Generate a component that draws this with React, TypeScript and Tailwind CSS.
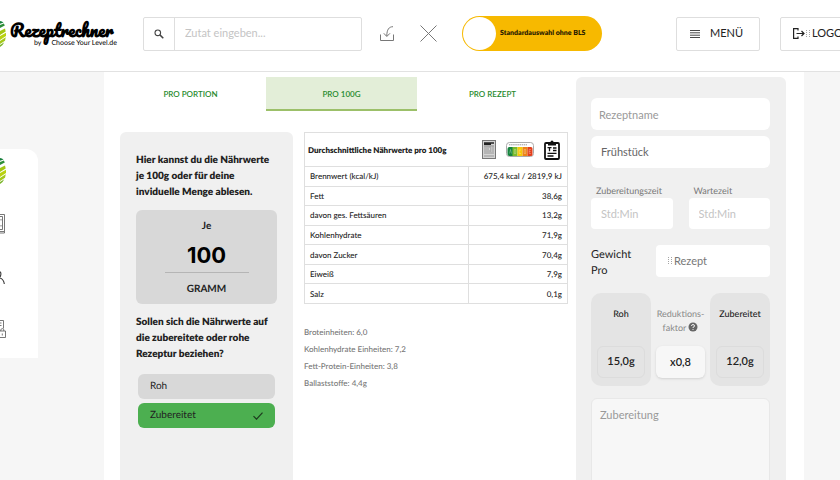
import { useState } from 'react';

const tabs = ['PRO PORTION', 'PRO 100G', 'PRO REZEPT'];

const nutrients = [
  { label: 'Brennwert (kcal/kJ)', value: '675,4 kcal / 2819,9 kJ' },
  { label: 'Fett', value: '38,6g' },
  { label: 'davon ges. Fettsäuren', value: '13,2g' },
  { label: 'Kohlenhydrate', value: '71,9g' },
  { label: 'davon Zucker', value: '70,4g' },
  { label: 'Eiweiß', value: '7,9g' },
  { label: 'Salz', value: '0,1g' },
];

const units = [
  'Broteinheiten: 6,0',
  'Kohlenhydrate Einheiten: 7,2',
  'Fett-Protein-Einheiten: 3,8',
  'Ballaststoffe: 4,4g',
];

function Ball() {
  return (
    <svg viewBox="0 0 6 28" className="h-7 w-1.5 shrink-0" aria-hidden="true">
      <path d="M0 1 Q2 1 3.500 2.500 L0 3.800Z" fill="#17803d" />
      <path d="M0 5 L3.800 3.500 L4.800 5.500 L0 8Z" fill="#2f8f3a" />
      <path d="M0 11 L5 8.500 L5.700 11.500 L0 15Z" fill="#a3c614" />
      <path d="M0 16 L6 12.800 L6 16 L0 20Z" fill="#b9d210" />
      <path d="M0 21 L5.800 17.300 L5 20.800 L0 24Z" fill="#a4c81a" />
      <path d="M0 25 L4.300 22.300 Q3 25.500 0 27Z" fill="#7ab52a" />
    </svg>
  );
}

function Dots() {
  return (
    <svg viewBox="0 0 5 8" className="h-2 w-[5px] shrink-0" fill="#a5a5a5" aria-hidden="true">
      {[0, 2, 4, 6].map((y) => (
        <g key={y}>
          <rect x="0" y={y} width="1" height="1" />
          <rect x="3" y={y} width="1" height="1" />
        </g>
      ))}
    </svg>
  );
}

function LabelIcon() {
  return (
    <svg viewBox="0 0 14 19" className="h-[19px] w-3.5" aria-hidden="true">
      <rect x="0.5" y="0.5" width="13" height="18" fill="#d4d4d4" stroke="#777" />
      <path d="M2 3h10M2 4.3h7" stroke="#222" strokeWidth="1.3" />
      <path d="M2 7h6M10 7h2M2 9h5M10 9h2M2 11h6M10 11h2M2 13h10M2 16h10" stroke="#888" strokeWidth="0.8" />
      <path d="M2 5.8h10M8.8 6v6" stroke="#666" strokeWidth="0.5" />
    </svg>
  );
}

function NutriScoreIcon() {
  return (
    <svg viewBox="0 0 28 15" className="h-[15px] w-7" aria-hidden="true">
      <rect x="0.5" y="0.5" width="27" height="14" rx="3" fill="#fff" stroke="#aaa" />
      <path d="M3 2.8h18" stroke="#999" strokeDasharray="1.5 0.6" />
      <path d="M3 5h4v9h-4a2 2 0 0 1-1.500-2v-5a2 2 0 0 1 1.500-2z" fill="#16843f" />
      <rect x="6.500" y="5" width="5" height="9" fill="#7cbb2d" />
      <rect x="11.500" y="5" width="5" height="9" fill="#f6c90a" />
      <rect x="16.500" y="5" width="5" height="9" fill="#ee8316" />
      <path d="M21.500 5h3.500a1.500 1.500 0 0 1 1.500 1.500v6a1.500 1.500 0 0 1-1.500 1.500h-3.500z" fill="#e2401d" />
      <g fill="none" stroke="#fff" strokeOpacity="0.35" strokeWidth="0.8">
        <path d="M3.500 11.500l1-4 1 4M8.300 7.500v4h1.500v-4zM15 8h-1.800v3.500H15M18.200 7.500v4h1.500v-4zM25 7.500h-1.800v4H25M23.200 9.500h1.500" />
      </g>
    </svg>
  );
}

function ClipboardIcon() {
  return (
    <svg viewBox="0 0 16 20" className="h-5 w-4" fill="none" stroke="#111" aria-hidden="true">
      <rect x="1" y="3" width="14" height="16" rx="1" strokeWidth="1.8" />
      <path d="M4 2h2.500a1.500 1.500 0 0 1 3 0H12v3.500H4z" fill="#111" stroke="none" />
      <path d="M3.500 7.700h4M5.500 7.700v3.500M9 8h3.500M9 10.500h3.500M3.500 13.300h9M3.500 16h6" strokeWidth="1.3" />
    </svg>
  );
}

function Header() {
  return (
    <header className="flex h-[72px] shrink-0 items-center border-b border-[#e2e2e2] bg-white pb-1">
      <a href="#" className="flex w-[143px] shrink-0 items-center gap-1 text-black">
        <Ball />
        <span className="flex flex-col">
          <span className="font-['Pacifico','Lato',cursive] text-[17px] leading-5 font-bold">Rezeptrechner</span>
          <span className="flex gap-2.5 pl-6 font-['Lato',sans-serif] text-[7px] leading-[7px]">
            <span>by</span>
            <span>Choose Your Level.de</span>
          </span>
        </span>
      </a>
      <form className="flex h-[34px] w-[219px] shrink-0 rounded-xs border border-[#dedede]" onSubmit={(e) => e.preventDefault()}>
        <button type="submit" aria-label="Suchen" className="flex w-[31px] items-center justify-center border-r border-[#dedede]">
          <svg viewBox="0 0 10 10" className="size-2.5" fill="none" stroke="#444" aria-hidden="true">
            <circle cx="3.800" cy="3.800" r="2.800" strokeWidth="1.100" />
            <path d="M5.900 5.900L9.300 9.300" strokeWidth="1.500" />
          </svg>
        </button>
        <input aria-label="Zutat" placeholder="Zutat eingeben..." className="min-w-0 flex-1 px-2.5 text-[11px] outline-none placeholder:text-[#c4c4c4]" />
      </form>
      <button aria-label="Importieren" className="ml-[18px] shrink-0">
        <svg viewBox="0 0 14 16" className="h-4 w-3.5" fill="none" stroke="#777" aria-hidden="true">
          <path d="M0.500 8.500v6h13v-6M13 0.700C9 0.700 6.800 3.500 6.800 10M3.800 7.300l3 3.200 3.200-3.200" />
        </svg>
      </button>
      <button aria-label="Leeren" className="ml-[26px] shrink-0">
        <svg viewBox="0 0 17 17" className="size-[17px]" fill="none" stroke="#777" aria-hidden="true">
          <path d="M0.500 0.500l16 16M16.500 0.500l-16 16" />
        </svg>
      </button>
      <label className="ml-[25px] flex h-[35px] w-[140px] shrink-0 items-center rounded-full bg-[#f7b900] pl-px text-[7px] font-extrabold text-[#2b2000]">
        <input type="checkbox" className="mr-1 size-[33px] shrink-0 appearance-none rounded-full bg-white" />
        <span className="whitespace-nowrap">Standardauswahl ohne BLS</span>
      </label>
      <div className="-mr-6 ml-auto flex gap-5 text-[11px] text-[#222]">
        <button className="flex h-[34px] w-21 shrink-0 items-center gap-2.5 rounded-xs border border-[#dedede] pl-[13px]">
          <svg viewBox="0 0 10 8" className="h-2 w-2.5" stroke="#333" aria-hidden="true">
            <path d="M0 0.500h10M0 2.800h10M0 5.200h10M0 7.500h10" strokeWidth="0.900" />
          </svg>
          MENÜ
        </button>
        <button className="flex h-[34px] w-21 shrink-0 items-center gap-px rounded-xs border border-[#dedede] pl-3">
          <svg viewBox="0 0 12 11" className="h-[11px] w-3" fill="none" stroke="#222" strokeWidth="1.200" aria-hidden="true">
            <path d="M5 2.500V0.600H0.600v9.800H5V8.500M3.500 5.500h7.500M8.500 3l2.500 2.500L8.500 8" />
          </svg>
          <Dots />
          LOGOUT
        </button>
      </div>
    </header>
  );
}

function Sidebar() {
  return (
    <aside className="w-[104px] shrink-0 pt-[77px]">
      <nav className="flex h-[209px] w-[38px] flex-col items-start rounded-tr-xl bg-white pt-2">
        <a href="#" aria-label="Start" className="h-[57px]">
          <Ball />
        </a>
        <a href="#" aria-label="Rezepte" className="h-[57px]">
          <svg viewBox="0 0 5 20" className="h-5 w-[5px]" fill="none" stroke="#555" aria-hidden="true">
            <path d="M0 0.500h4.500v18.500H0M0 2.500h2.500v13H0M0 17.500h4M1 5v1.500M1 11v1.500" strokeWidth="0.800" />
          </svg>
        </a>
        <a href="#" aria-label="Profil" className="h-[49px]">
          <svg viewBox="0 0 5 14" className="h-3.5 w-[5px]" fill="none" stroke="#333" aria-hidden="true">
            <path d="M0 0.700Q1.500 2 0.500 5L0 6M0 7Q3.800 8.500 4.300 13" strokeWidth="1.100" />
          </svg>
        </a>
        <a href="#" aria-label="Datenschutz">
          <svg viewBox="0 0 6 18" className="h-[18px] w-1.5" fill="none" stroke="#555" strokeWidth="0.800" aria-hidden="true">
            <path d="M0 0.500h3.500v8M0 3h1.500M0 5.500h1.500M0 11h5.500v6.500H0M0.800 11V9.500q1.500-2 3 0V11M2.300 13.500v2" />
          </svg>
        </a>
      </nav>
    </aside>
  );
}

function AmountPanel() {
  const [basis, setBasis] = useState('Zubereitet');

  return (
    <section className="w-[173px] shrink-0 rounded-t-md bg-[#f0f0f0] px-4 pt-5">
      <h2 className="text-[10px] leading-4 font-extrabold">Hier kannst du die Nährwerte je 100g oder für deine inviduelle Menge ablesen.</h2>
      <div className="mt-2.5 flex h-[94px] flex-col items-center rounded-md bg-[#d8d8d8] pt-2 text-[10px] font-bold">
        <label htmlFor="amount" className="leading-4">Je</label>
        <input
          id="amount"
          defaultValue="100"
          className="h-[39px] w-21 border-b border-[#b5b5b5] pt-1 text-center font-['Inter',sans-serif] text-[22px] font-bold text-black outline-none"
        />
        <span className="pt-2 leading-4">GRAMM</span>
      </div>
      <fieldset>
        <legend className="pt-2.5 pb-3 text-[10px] leading-4 font-extrabold">Sollen sich die Nährwerte auf die zubereitete oder rohe Rezeptur beziehen?</legend>
        <div className="flex flex-col gap-1 px-0.5">
          {['Roh', 'Zubereitet'].map((name) => (
            <label
              key={name}
              className={`flex h-[25px] items-center justify-between rounded-md px-3 text-[10px] ${basis === name ? 'bg-[#4caf50]' : 'bg-[#d8d8d8]'}`}
            >
              {name}
              <input type="radio" name="basis" className="size-0 appearance-none" checked={basis === name} onChange={() => setBasis(name)} />
              {basis === name && (
                <svg viewBox="0 0 10 8" className="h-2 w-2.5" fill="none" stroke="#1d3b1e" strokeWidth="1.200" aria-hidden="true">
                  <path d="M0.500 4.200l3 3L9.500 0.700" />
                </svg>
              )}
            </label>
          ))}
        </div>
      </fieldset>
    </section>
  );
}

function NutritionTable() {
  return (
    <section className="min-w-0 flex-1">
      <table className="h-[172px] w-full border-collapse border border-[#dfdfdf] text-[8px]">
        <thead>
          <tr className="h-[34px] border-b border-[#dfdfdf]">
            <th colSpan={2} className="px-[3px] text-left font-extrabold">
              <div className="flex items-center justify-between">
                Durchschnittliche Nährwerte pro 100g
                <span className="flex items-center gap-2.5 pr-1">
                  <LabelIcon />
                  <NutriScoreIcon />
                  <ClipboardIcon />
                </span>
              </div>
            </th>
          </tr>
        </thead>
        <tbody>
          {nutrients.map((row) => (
            <tr key={row.label} className="border-b border-[#dfdfdf] leading-4 font-medium">
              <td className="pl-[5px]">{row.label}</td>
              <td className="w-[99px] border-l border-[#dfdfdf] pr-[5px] text-right whitespace-nowrap">{row.value}</td>
            </tr>
          ))}
        </tbody>
      </table>
      <ul className="mt-5 text-[8px] leading-[17px] font-medium text-[#777]">
        {units.map((unit) => (
          <li key={unit}>{unit}</li>
        ))}
      </ul>
    </section>
  );
}

function RecipePanel() {
  return (
    <section className="w-[210px] shrink-0 rounded-t-md bg-[#f0f0f0] pr-4 pl-[15px] pt-[21px] text-[11px]">
      <input aria-label="Rezeptname" placeholder="Rezeptname" className="h-8 w-full rounded-md bg-white px-2 outline-none placeholder:text-[#999]" />
      <select aria-label="Kategorie" className="mt-1.5 block h-8 w-full appearance-none rounded-md bg-white px-2.5 text-[#666]">
        <option>Frühstück</option>
      </select>
      <div className="mt-[15px] flex gap-4">
        {['Zubereitungszeit', 'Wartezeit'].map((name) => (
          <label key={name} className="min-w-0 flex-1 text-[9px] leading-[15px] text-[#777]">
            <span className="pl-[5px]">{name}</span>
            <input placeholder="Std:Min" className="block h-[31px] w-full rounded-sm bg-white px-2.5 text-[11px] outline-none placeholder:text-[#c4c4c4]" />
          </label>
        ))}
      </div>
      <div className="mt-4 flex justify-between">
        <label htmlFor="weight" className="w-12 pt-0.5 leading-4">Gewicht Pro</label>
        <div className="flex h-8 w-[114px] items-center gap-px rounded-sm bg-white pl-3 text-[#777]">
          <Dots />
          <select id="weight" className="flex-1 appearance-none">
            <option>Rezept</option>
          </select>
        </div>
      </div>
      <div className="mt-3.5 flex justify-between text-center">
        <div className="flex h-[93px] w-[60px] flex-col items-center justify-between rounded-[10px] bg-[#e4e4e4] px-1.5 pt-3.5 pb-2">
          <span className="text-[9px] leading-[14px] font-medium">Roh</span>
          <output className="h-8 w-full rounded-md border border-[#dcdcdc] text-[11px] leading-[30px] font-semibold">15,0g</output>
        </div>
        <div className="flex h-[93px] w-[49px] flex-col items-center justify-between pt-3.5 pb-2">
          <span className="text-[9px] leading-[14px] text-[#888]">
            Reduktions-
            <br />
            faktor
            <svg viewBox="0 0 10 10" className="mb-1 ml-0.5 inline size-2.5" aria-hidden="true">
              <circle cx="5" cy="5" r="4.500" fill="#666" />
              <path d="M3.500 4q0-1.500 1.500-1.500T6.500 4Q6.500 5 5 5.300V6M5 7v1" fill="none" stroke="#fff" strokeWidth="0.900" />
            </svg>
          </span>
          <button className="h-8 w-full rounded-md bg-[#f7f7f7] text-[11px] font-semibold shadow">x0,8</button>
        </div>
        <div className="flex h-[93px] w-[60px] flex-col items-center justify-between rounded-[10px] bg-[#e4e4e4] px-1.5 pt-3.5 pb-2">
          <span className="text-[9px] leading-[14px] font-medium">Zubereitet</span>
          <output className="h-8 w-full rounded-md border border-[#dcdcdc] text-[11px] leading-[30px] font-semibold">12,0g</output>
        </div>
      </div>
      <textarea
        aria-label="Zubereitung"
        placeholder="Zubereitung"
        className="mt-3 block h-40 w-full resize-none rounded-md border border-[#e8e8e8] bg-[#f7f7f7] p-2 outline-none placeholder:text-[#999]"
      />
    </section>
  );
}

export default function App() {
  const [tab, setTab] = useState('PRO 100G');

  return (
    <div className="flex h-screen flex-col overflow-hidden bg-[#f6f6f6] font-['Lato',sans-serif] text-[#222] [text-rendering:geometricPrecision]">
      <Header />
      <div className="flex min-h-0 flex-1">
        <Sidebar />
        <main className="mr-9 flex min-w-0 flex-1 gap-2 bg-white pt-[5px] pr-[18px] pl-[11px]">
          <div className="flex min-w-0 flex-1 flex-col">
            <div role="tablist" className="flex text-[8px] text-[#1f8a2c]">
              {tabs.map((name) => (
                <button
                  key={name}
                  role="tab"
                  aria-selected={tab === name}
                  onClick={() => setTab(name)}
                  className={`h-[34px] flex-1 border-b-2 pt-0.5 font-semibold ${tab === name ? 'border-[#9cc069] bg-[#e3eed8]' : 'border-transparent'}`}
                >
                  {name}
                </button>
              ))}
            </div>
            <div className="mt-[21px] flex min-h-0 flex-1 gap-[11px] pl-[5px]">
              <AmountPanel />
              <NutritionTable />
            </div>
          </div>
          <RecipePanel />
        </main>
      </div>
    </div>
  );
}
